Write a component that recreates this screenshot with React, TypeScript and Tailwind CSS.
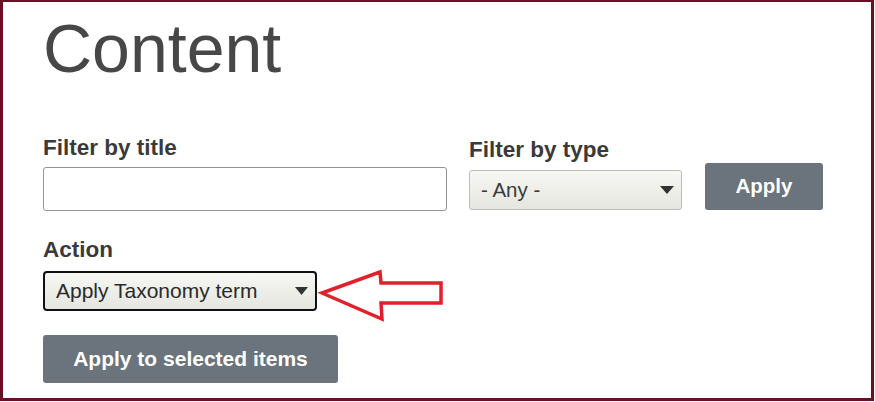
const font = { fontFamily: '"Liberation Sans", Arial, sans-serif' };

const Caret = ({ w, h }: { w: number; h: number }) => (
  <svg width={w} height={h} viewBox={`0 0 ${w} ${h}`} className="shrink-0">
    <polygon points={`0,0 ${w},0 ${w / 2},${h}`} fill="#333333" />
  </svg>
);

export default function App() {
  return (
    <div
      style={font}
      className="w-[874px] h-[401px] border-[3px] border-t-2 border-[#6b0f24] bg-white pl-[40px] text-[#3a3a3a]"
    >
      {/* Page title */}
      <h1 className="mt-[12px] text-[68px] leading-none font-normal text-[#474747]">Content</h1>

      {/* Filters */}
      <div className="mt-[53px] flex items-end">
        <div className="flex flex-col">
          <label className="text-[22.5px] leading-[26px] font-bold mb-[6px]">Filter by title</label>
          <input
            type="text"
            className="w-[404px] h-[44px] rounded-[3px] border border-[#959595] bg-white px-3 outline-none"
          />
        </div>
        <div className="ml-[22px] mb-[1px] flex flex-col">
          <label className="text-[22.5px] leading-[26px] font-bold mb-[7px]">Filter by type</label>
          <div className="w-[213px] h-[40px] rounded-[3px] border border-[#bcbcb8] bg-gradient-to-b from-[#f7f7f3] to-[#e6e6e0] pl-[11px] pr-[7px] flex items-center justify-between text-[20.5px] text-[#3a3a3a]">
            <span>- Any -</span>
            <Caret w={14} h={8} />
          </div>
        </div>
        <button className="ml-[23px] mb-[1px] w-[118px] h-[47px] rounded-[3px] bg-[#6b737c] text-white text-[20.5px] font-bold">
          Apply
        </button>
      </div>

      {/* Bulk action */}
      <div className="mt-[26px] flex flex-col items-start">
        <label className="text-[22.5px] leading-[26px] font-bold mb-[8px]">Action</label>
        <div className="flex items-center">
          <div className="w-[274px] h-[40px] rounded-[4px] border-2 border-[#111111] bg-gradient-to-b from-[#f7f7f3] to-[#e6e6e0] pl-[11px] pr-[7px] flex items-center justify-between text-[21px] text-[#2a2a2a]">
            <span>Apply Taxonomy term</span>
            <Caret w={13} h={8} />
          </div>
          <svg width="126" height="40" viewBox="0 0 126 40" className="ml-[2px] overflow-visible">
            <polygon
              points="3,22 61,1 62,12 122,12 122,32 62,32 63,48"
              fill="none"
              stroke="#e0202b"
              strokeWidth="3.5"
              strokeLinejoin="miter"
            />
          </svg>
        </div>
        <button className="mt-[24px] w-[295px] h-[48px] rounded-[3px] bg-[#6b737c] text-white text-[21px] font-bold">
          Apply to selected items
        </button>
      </div>
    </div>
  );
}
